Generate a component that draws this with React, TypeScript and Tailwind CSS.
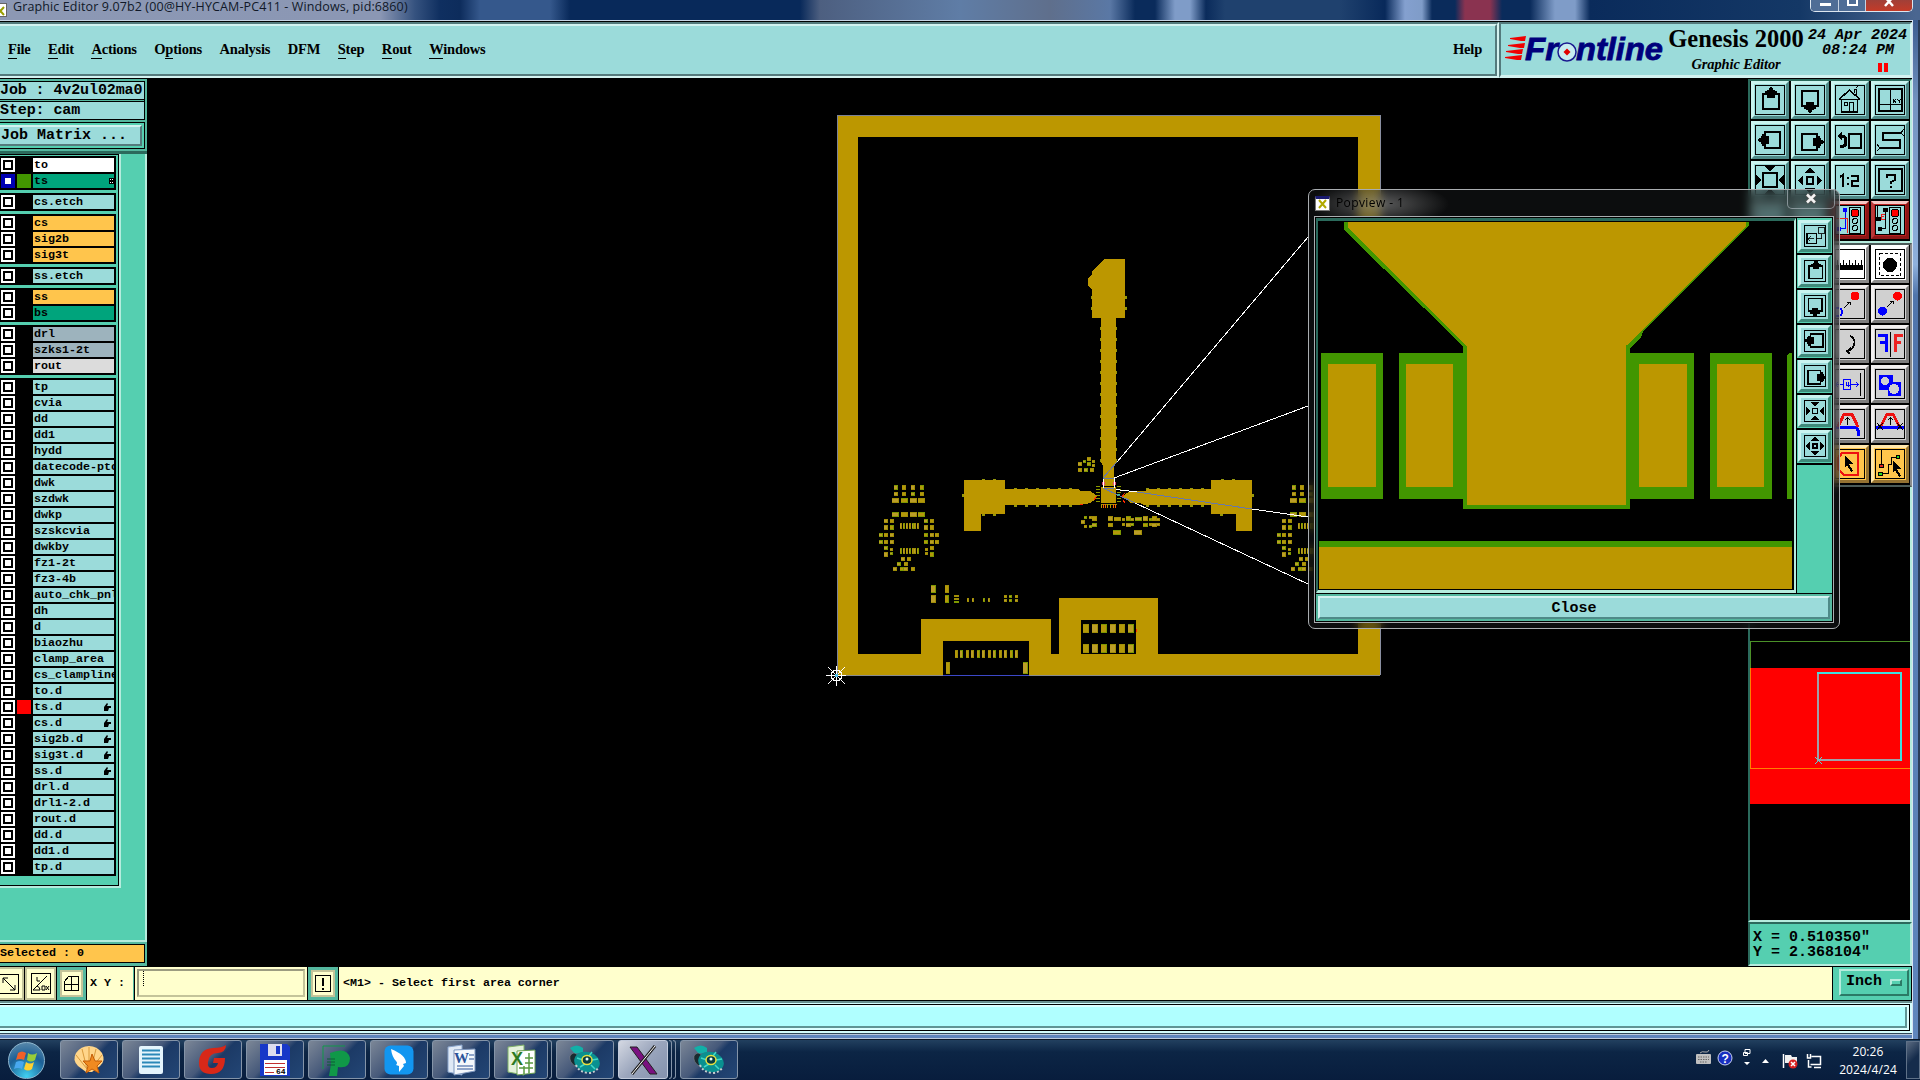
import type { ReactNode } from "react";

type Layer = { name: string; bg?: string; color?: string; active?: boolean; mark?: "grid" | "hand" };

const TEAL = "bg-[#9bdbda]";
const ORANGE = "bg-[#ffc54c]";
const GREEN = "bg-[#00a47c]";
const SLATE = "bg-[#9db3bd]";

const layerGroups: Layer[][] = [
  [
    { name: "to", bg: "bg-white" },
    { name: "ts", bg: GREEN, color: "bg-[#429600]", active: true, mark: "grid" },
  ],
  [{ name: "cs.etch" }],
  [
    { name: "cs", bg: ORANGE },
    { name: "sig2b", bg: ORANGE },
    { name: "sig3t", bg: ORANGE },
  ],
  [{ name: "ss.etch" }],
  [
    { name: "ss", bg: ORANGE },
    { name: "bs", bg: GREEN },
  ],
  [
    { name: "drl", bg: SLATE },
    { name: "szks1-2t", bg: SLATE },
    { name: "rout", bg: "bg-[#dcdcdc]" },
  ],
  [
    { name: "tp" },
    { name: "cvia" },
    { name: "dd" },
    { name: "dd1" },
    { name: "hydd" },
    { name: "datecode-ptc" },
    { name: "dwk" },
    { name: "szdwk" },
    { name: "dwkp" },
    { name: "szskcvia" },
    { name: "dwkby" },
    { name: "fz1-2t" },
    { name: "fz3-4b" },
    { name: "auto_chk_pnl" },
    { name: "dh" },
    { name: "d" },
    { name: "biaozhu" },
    { name: "clamp_area" },
    { name: "cs_clampline" },
    { name: "to.d" },
    { name: "ts.d", color: "bg-[#ff0000]", mark: "hand" },
    { name: "cs.d", mark: "hand" },
    { name: "sig2b.d", mark: "hand" },
    { name: "sig3t.d", mark: "hand" },
    { name: "ss.d", mark: "hand" },
    { name: "drl.d" },
    { name: "drl1-2.d" },
    { name: "rout.d" },
    { name: "dd.d" },
    { name: "dd1.d" },
    { name: "tp.d" },
  ],
];

// [text before, underlined letter, text after]
const menus = [
  ["", "F", "ile"],
  ["", "E", "dit"],
  ["", "A", "ctions"],
  ["O", "p", "tions"],
  ["Analysis", "", ""],
  ["DFM", "", ""],
  ["", "S", "tep"],
  ["", "R", "out"],
  ["", "W", "indows"],
];

const MONO15 = "font-['Liberation_Mono',monospace] text-[15px] font-bold whitespace-pre";
const MONO12 = "font-['Liberation_Mono',monospace] text-[11.67px] font-bold whitespace-pre";

function Svg({ size, box = "1 1 28 28", children }: { size: number; box?: string; children: ReactNode }) {
  return (
    <svg width={size} height={size} viewBox={box} fill="none" stroke="#000" strokeWidth="1" shapeRendering="crispEdges" className="block">
      {children}
    </svg>
  );
}

/* ---------- toolbar glyphs, all on a 30x30 board ---------- */
const up = (
  <>
    <path d="M12 9H8v15h16V9h-4" strokeWidth="2" />
    <path d="M12 13h8V8h2V6h-2V5h-2V3h-1V2h-2v1h-1v2h-2v1h-2v2h2z" fill="#000" stroke="none" />
  </>
);
const down = <g transform="rotate(180 15.500 15)">{up}</g>;
const left = <g transform="rotate(-90 15.500 15)">{up}</g>;
const right = <g transform="rotate(90 15 15.500)">{up}</g>;

const house = (
  <>
    <path d="M4 14.500L14.500 5L25 14.500M6.500 14v13h16V14M4 14.500h21" strokeWidth="1.500" />
    <path d="M9.500 17.500h3v3h-3zM14.500 26v-9h4v9M19 8V4h2v6M21 3l2-2" />
  </>
);
const panXY = (
  <>
    <rect x="4" y="4" width="23" height="22" strokeWidth="2" />
    <path d="M15.500 4v22M4 19.500h23" />
    <path d="M18 14l3 4M21 14l-3 4M22 14l2 2l2-2M24 16v2" />
  </>
);
const back = (
  <>
    <rect x="14" y="9" width="12" height="14" strokeWidth="2" />
    <path d="M4 11h4q3 1 3 6t-6 5" strokeWidth="3" />
    <path d="M2 11l5-5v10z" fill="#000" stroke="none" />
  </>
);
const snake = (
  <>
    <path d="M27 8H8v7h17v8H5" strokeWidth="2" />
    <path d="M29 4l-3 4l3 3M2 19l3 4l-3 3" />
  </>
);
const zoomIn = (
  <>
    <rect x="8" y="8" width="14" height="14" strokeWidth="2" />
    <path d="M9 1h12l-6 5zM9 29h12l-6-5zM1 9v12l5-6zM29 9v12l-5-6z" fill="#000" stroke="none" />
  </>
);
const zoomOut = (
  <>
    <rect x="12" y="12" width="6" height="7" strokeWidth="2" />
    <path d="M9 8h12l-6-5zM9 23h12l-6 5zM8 10v11l-5-5.500zM22 10v11l5-5.500z" fill="#000" stroke="none" />
  </>
);
const oneTwo = (
  <path d="M5 12l3-2v12M13 12v2M13 18v2M16 11h7v5h-6v5h7" strokeWidth="2" />
);
const question = (
  <>
    <rect x="4" y="4" width="23" height="22" strokeWidth="2" />
    <path d="M12 13V10h8v5l-4 2v2M16 21v2" strokeWidth="2" />
  </>
);
const netA = (
  <>
    <path d="M10 3v20H3" stroke="#00f" />
    <path d="M1 13h11v15" stroke="#e22" />
    <circle cx="10" cy="5" r="2.500" fill="#00f" stroke="none" />
    <circle cx="4" cy="24" r="2.500" fill="#00f" stroke="none" />
    <rect x="14.500" y="2.500" width="11" height="26" />
    <circle cx="20" cy="8" r="4" fill="#f00" />
    <circle cx="20" cy="16" r="2.500" />
    <circle cx="20" cy="23" r="2.500" />
  </>
);
const netB = (
  <>
    <path d="M2.500 1v13M10.500 5v18H4M4 14h3" />
    <path d="M6 9v5h4M6 11h3M7 9h3" stroke="#e22" />
    <circle cx="10.500" cy="5" r="2.500" fill="#000" stroke="none" />
    <circle cx="3.500" cy="14" r="2.500" fill="#000" stroke="none" />
    <circle cx="5" cy="24" r="2.500" fill="#000" stroke="none" />
    <rect x="14.500" y="2.500" width="11" height="26" />
    <circle cx="20" cy="8" r="4" fill="#f00" />
    <circle cx="20" cy="16" r="2.500" />
    <circle cx="20" cy="23" r="2.500" />
  </>
);
const ruler = (
  <>
    <path d="M0 18.500h28" strokeWidth="5" />
    <path d="M2.500 11v6M5.500 14v3M8.500 11v6M11.500 14v3M14.500 11v6M17.500 14v3M20.500 11v6M23.500 14v3M26.500 11v6" />
  </>
);
const dotSel = (
  <>
    <rect x="4.500" y="4.500" width="21" height="22" strokeDasharray="3 2" />
    <circle cx="15" cy="16" r="7" fill="#000" stroke="none" />
  </>
);
const copyDot = (
  <>
    <circle cx="3" cy="23" r="4" stroke="#00f" strokeWidth="2" />
    <circle cx="20" cy="7" r="4.500" fill="#f00" stroke="none" />
    <path d="M9 19l6-6M12 13h3v3" />
  </>
);
const moveDot = (
  <>
    <circle cx="7.500" cy="22" r="4.500" fill="#00f" stroke="none" />
    <circle cx="22.500" cy="7" r="4.500" fill="#f00" stroke="none" />
    <path d="M12 18l6-6M15 12h3v3" />
  </>
);
const rotate = <path d="M15 7q6 2 4 9q-2 6-7 6M16 19l-4 3l3 3" strokeWidth="1.500" />;
const mirror = (
  <>
    <path d="M15.500 3v25" />
    <path d="M3 6h8v17M5 13h6" stroke="#00f" strokeWidth="3" />
    <path d="M28 6h-8v17M26 13h-6" stroke="#e22" strokeWidth="3" />
  </>
);
const resize = (
  <>
    <path d="M0 15.500h9M16 15.500h8M3 13l-2 2.500l2 2.500M21 13l2 2.500l-2 2.500" stroke="#00f" />
    <rect x="8.500" y="10.500" width="7" height="10" stroke="#00f" />
    <path d="M11 13v3h4M13.500 13v5" stroke="#00f" />
    <path d="M25.500 4v23" />
  </>
);
const shape = (
  <>
    <path d="M4 6h14v7h8v14H13v-6H4z" fill="#00f" stroke="none" />
    <circle cx="10" cy="12" r="4" fill="#d0d0d0" stroke="none" />
    <circle cx="19" cy="20" r="5" fill="#d0d0d0" stroke="none" />
  </>
);
const bridgeA = (
  <>
    <path d="M0 18h20q4 2 4 9" stroke="#00f" strokeWidth="3" />
    <path d="M3 18L9 5h8l6 13" stroke="#e11" strokeWidth="3" />
    <path d="M12.500 9v7M10 11l2.500-2.500l2.500 2.500" />
  </>
);
const bridgeB = (
  <>
    <path d="M1 18h28" stroke="#00f" strokeWidth="3" />
    <path d="M6 17L12 5h6l6 12" stroke="#e11" strokeWidth="3" />
    <path d="M15.500 9v7M13 11l2.500-2.500l2.500 2.500M2 14l6 7M8 14l-6 7M22 14l6 7M28 14l-6 7" />
  </>
);
const arrowHead = "M0 0l8 8l-4 0l4 7l-2 1l-4-7l-2 3z";
const selPoly = (
  <>
    <path d="M7 4h16v22H9l-6-6V9z" stroke="#e11" strokeWidth="2.500" />
    <path d={arrowHead} transform="translate(10 7)" fill="#000" stroke="none" />
  </>
);
const selNet = (
  <>
    <path d="M6.500 1v16M7 24h6v-9h3V8h6" />
    <circle cx="6.500" cy="17" r="2" fill="#d22" />
    <circle cx="5.500" cy="25" r="2" fill="#2d2" />
    <circle cx="23" cy="8" r="2" fill="#2d2" />
    <path d={arrowHead} transform="translate(18 12)" fill="#000" stroke="none" />
  </>
);
const popIcon = (
  <>
    <rect x="5" y="12" width="12" height="12" strokeWidth="2" />
    <rect x="19.500" y="4.500" width="7" height="8" />
    <path d="M17 18h6v-6M14 18H7M10 15l-3 3l3 3" />
  </>
);
const popZoomIn = (
  <>
    <rect x="12" y="12" width="6" height="6" strokeWidth="2" />
    <path d="M9 4h12l-6 6zM9 26h12l-6-6zM4 9v12l6-6zM26 9v12l-6-6z" fill="#000" stroke="none" />
  </>
);
const popZoomOut = (
  <>
    <rect x="12.500" y="12.500" width="5" height="5" strokeWidth="1.500" />
    <path d="M10 9h10l-5-5zM10 21h10l-5 5zM9 10v10l-5-5zM21 10v10l5-5z" fill="#000" stroke="none" />
  </>
);

const tones = {
  teal: "border-t-[#c9f3ef] border-l-[#c9f3ef] border-b-[#4f8a88] border-r-[#4f8a88] bg-[#9bdbda]",
  red: "border-t-[#f5c6c4] border-l-[#b83a3a] border-b-[#8c1717] border-r-[#8c1717] bg-[#b92020]",
  white: "border-t-white border-l-white border-b-[#8b8b8b] border-r-[#8b8b8b] bg-white",
  gray: "border-t-[#f2f0f0] border-l-[#f2f0f0] border-b-[#7d7d7d] border-r-[#7d7d7d] bg-[#d0d0d0]",
  gold: "border-t-[#ffe7ad] border-l-[#ffe7ad] border-b-[#947232] border-r-[#947232] bg-[#ffc54c]",
};

type Tool = { tone: keyof typeof tones; icon: ReactNode };

const topTools: Tool[] = [
  { tone: "teal", icon: up },
  { tone: "teal", icon: down },
  { tone: "teal", icon: house },
  { tone: "teal", icon: panXY },
  { tone: "teal", icon: left },
  { tone: "teal", icon: right },
  { tone: "teal", icon: back },
  { tone: "teal", icon: snake },
  { tone: "teal", icon: zoomIn },
  { tone: "teal", icon: zoomOut },
  { tone: "teal", icon: oneTwo },
  { tone: "teal", icon: question },
  { tone: "teal", icon: null },
  { tone: "teal", icon: null },
  { tone: "red", icon: netA },
  { tone: "red", icon: netB },
];

const editTools: Tool[] = [
  { tone: "white", icon: null },
  { tone: "white", icon: null },
  { tone: "white", icon: ruler },
  { tone: "white", icon: dotSel },
  { tone: "gray", icon: null },
  { tone: "gray", icon: null },
  { tone: "gray", icon: copyDot },
  { tone: "gray", icon: moveDot },
  { tone: "gray", icon: null },
  { tone: "gray", icon: null },
  { tone: "gray", icon: rotate },
  { tone: "gray", icon: mirror },
  { tone: "gray", icon: null },
  { tone: "gray", icon: null },
  { tone: "gray", icon: resize },
  { tone: "gray", icon: shape },
  { tone: "gray", icon: null },
  { tone: "gray", icon: null },
  { tone: "gray", icon: bridgeA },
  { tone: "gray", icon: bridgeB },
  { tone: "gold", icon: null },
  { tone: "gold", icon: null },
  { tone: "gold", icon: selPoly },
  { tone: "gold", icon: selNet },
];

function ToolButton({ tone, icon }: Tool) {
  return (
    <div className={`w-[38px] h-[38px] border-[3px] p-px ${tones[tone]}`}>
      <div className={`w-[30px] h-[30px] border border-black overflow-hidden ${tone === "red" ? TEAL : ""}`}>
        <Svg size={28}>{icon}</Svg>
      </div>
    </div>
  );
}

function TitleBar() {
  return (
    <div className="h-[20px] shrink-0 flex justify-between overflow-hidden bg-[linear-gradient(90deg,#8c98b4_0,#8b97b4_380px,#35527f_415px,#0f2f60_440px,#0d2c5c_460px,#35588c_480px,#35588c_550px,#08295a_570px,#08295a_800px,#4d5f80_820px,#5f7da6_960px,#5f6f8c_1050px,#5a78a5_1110px,#0a2b5b_1135px,#0a2b5b_1155px,#7f9cc8_1175px,#7f9cc8_1190px,#0a2b5b_1206px,#1f416e_1225px,#1f416e_1340px,#08295a_1385px,#84a0cf_1405px,#7f9cc8_1422px,#0a2b5b_1432px,#0a2b5b_1455px,#8a3350_1465px,#8a3350_1490px,#0a2b5b_1502px,#0a2b5b_1530px,#7f9cc8_1555px,#7f9cc8_1575px,#0a2b5b_1590px,#143866_1800px,#4a6690_1915px)]">
      <div className="flex items-center">
        <div className="w-[7px] h-[14px] border border-l-0 border-[#666] bg-white overflow-hidden">
          <svg width="7" height="12"><path d="M-3 3L4 11M4 3L-3 11" stroke="#99a000" strokeWidth="2" /></svg>
        </div>
        <span className="ml-[6px] -mt-[6px] font-['Open_Sans',sans-serif] text-[12.5px] leading-[18px] tracking-[0.12px] text-[#101828] whitespace-pre">Graphic Editor 9.07b2 (00@HY-HYCAM-PC411 - Windows, pid:6860)</span>
      </div>
      <div className="flex h-[12px] w-[103px] mr-[7px] rounded-b-[5px] border border-t-0 border-[#dde6f0] overflow-hidden">
        <div className="w-[28px] bg-[#4f6d96] border-r border-[#c5d2e2] pt-[3px] pl-[9px]"><div className="w-[11px] h-[3px] bg-white" /></div>
        <div className="w-[27px] bg-[#4f6d96] border-r border-[#c5d2e2] pl-[8px]"><div className="w-[11px] h-[6px] border-2 border-t-0 border-white" /></div>
        <div className="flex-1 bg-[linear-gradient(#a04038,#c43a28)] flex justify-center">
          <svg width="12" height="8"><path d="M2 -3L10 6M10 -3L2 6" stroke="#fff" strokeWidth="2.500" /></svg>
        </div>
      </div>
    </div>
  );
}

function FrontlineLogo() {
  return (
    <svg width="166" height="52" viewBox="0 0 166 52" className="block shrink-0">
      <path d="M9 14l16-2l-1 5h-4l-11-2zM7 21l17-2l-1 5h-4l-12-2zM5 27l17-2l-1 5h-4l-12-2zM4 33l17-2l-1 5h-4l-12-2z" fill="#f00000" />
      <g fill="#00007c" fontFamily="'Liberation Sans', sans-serif" fontWeight="700" fontStyle="italic" fontSize="31" stroke="#00007c" strokeWidth="0.800">
        <text x="24" y="36" textLength="33" lengthAdjust="spacingAndGlyphs">Fr</text>
        <text x="75" y="36" textLength="87" lengthAdjust="spacingAndGlyphs">ntline</text>
      </g>
      <circle cx="66" cy="28" r="9" fill="#c8ecf0" stroke="#1a1a90" strokeWidth="1.500" />
      <path d="M66 24.500l3.500 3.500l-3.500 3.500l-3.500-3.500z" fill="#e00000" />
    </svg>
  );
}

function Header() {
  return (
    <div className="flex h-[56px] shrink-0">
      <div className="w-[1499px] border-t-2 border-t-[#547a7c] border-b-2 border-r-2 border-b-[#d3f2f0] border-r-[#d3f2f0]">
        <div className={`h-full flex items-start justify-between border-t-2 border-t-[#d3f2f0] border-b-2 border-r-2 border-b-[#547a7c] border-r-[#547a7c] ${TEAL} font-['Liberation_Serif',serif] font-bold text-[14.500px] leading-[18px] tracking-[-0.2px] pt-[14px]`}>
          <div className="flex gap-[17.500px] pl-[8px]">
            {menus.map(([pre, key, post]) => (
              <span key={pre + key + post} className="whitespace-pre">
                {pre}
                {key && <span className="border-b border-black pb-px">{key}</span>}
                {post}
              </span>
            ))}
          </div>
          <span className="pr-[13px]">Help</span>
        </div>
      </div>
      <div className={`flex-1 flex border-t-2 border-l-2 border-t-[#547a7c] border-l-[#547a7c] border-b-[3px] border-r-2 border-b-[#d3f2f0] border-r-[#d3f2f0] ${TEAL} overflow-hidden`}>
        <FrontlineLogo />
        <div className="w-[138px] shrink-0 flex flex-col items-center font-['Liberation_Serif',serif] font-bold">
          <span className="text-[24.500px] leading-[30px] whitespace-nowrap">Genesis 2000</span>
          <span className="text-[14.500px] leading-[18px] mt-[1px] italic font-bold tracking-[-0.1px] whitespace-nowrap">Graphic Editor</span>
        </div>
        <div className={`flex flex-col items-end pl-[3px] ${MONO15} italic leading-[15px] pt-[4px]`}>
          <span>24 Apr 2024</span>
          <span className="pr-[13px]">08:24 PM</span>
          <div className="flex gap-[2px] mr-[19px] mt-[5px]">
            <div className="w-[4px] h-[9px] bg-[#ff0000]" />
            <div className="w-[4px] h-[9px] bg-[#ff0000]" />
          </div>
        </div>
      </div>
    </div>
  );
}

function LayerRow({ layer }: { layer: Layer }) {
  return (
    <div className="flex h-[14px] mb-[2px] gap-[2px] pl-px">
      <div className={`w-[14px] h-[14px] p-[2px] shrink-0 ${layer.active ? "bg-[#0000b4]" : "bg-white"}`}>
        <div className={`w-[10px] h-[10px] border-2 bg-white ${layer.active ? "border-[#0000b4]" : "border-black"}`} />
      </div>
      <div className={`w-[14px] shrink-0 ${layer.color ?? "bg-black"}`} />
      <div className={`w-[81px] shrink-0 flex items-center justify-between overflow-hidden pl-px ${layer.bg ?? TEAL}`}>
        <span className={`${MONO12} leading-[14px]`}>{layer.name}</span>
        {layer.mark === "grid" && (
          <svg width="5" height="6" shapeRendering="crispEdges" className="shrink-0"><rect width="5" height="6" fill="#000" /><path d="M1 1h1v1h-1zM3 1h1v1h-1zM1 4h1v1h-1zM3 4h1v1h-1z" fill="#fff" /></svg>
        )}
        {layer.mark === "hand" && (
          <svg width="9" height="8" className="mr-[2px] shrink-0"><path d="M1 4L4 0L5 1L4 3H8V5H6L5 8H1z" fill="#000" /></svg>
        )}
      </div>
    </div>
  );
}

function Sidebar() {
  return (
    <div className="w-[147px] shrink-0 flex flex-col bg-[#55b89f] overflow-hidden border-t border-black">
      <div className="mt-[2px] w-[145px] border border-l-0 border-black">
        <div className={`h-[18px] ${TEAL} ${MONO15} leading-[18px] tracking-[-0.1px] border-b border-black`}>Job : 4v2ul02ma0</div>
        <div className="h-px bg-[#55b89f]" />
        <div className={`h-[18px] ${TEAL} ${MONO15} leading-[17px] tracking-[-0.1px] border-t border-black`}>Step: cam</div>
      </div>
      <div className="mt-[2px] h-[27px] w-[145px] border border-l-0 border-black bg-[#55cfb0] pt-[2px] pr-[2px] shrink-0">
        <div className={`h-[21px] border-t-2 border-t-[#d3f2f0] border-b-2 border-r-2 border-b-[#547a7c] border-r-[#547a7c] ${TEAL} ${MONO15} leading-[18px] indent-px`}>Job Matrix ...</div>
      </div>
      <div className="mt-[2px] h-[3px] shrink-0 bg-[#2b6a5c]" />
      <div className="flex-1 border-r-2 border-[#b5ecdd] border-b-2 bg-[#55cfb0]">
        <div className="w-[121px] border-r-2 border-b-2 border-[#b5ecdd]">
          <div className="h-[732px] border-r border-t border-b border-black pt-px pr-[2px]">
            <div className="flex flex-col gap-[3px]">
              {layerGroups.map((group, i) => (
                <div key={i} className="w-[116px] bg-black pt-[2px]">
                  {group.map((layer) => (
                    <LayerRow key={layer.name} layer={layer} />
                  ))}
                </div>
              ))}
            </div>
          </div>
        </div>
      </div>
      <div className={`mt-[2px] mb-[3px] h-[19px] w-[145px] shrink-0 border border-l-0 border-black ${ORANGE} ${MONO12} leading-[16px]`}>Selected : 0</div>
    </div>
  );
}

/* ---------- board artwork ---------- */
type Pad = [x: number, y: number, w: number, h: number];

const cols = (xs: number[], y: number, w: number, h: number): Pad[] => xs.map((x) => [x, y, w, h]);

const connectorCluster: Pad[] = [
  ...cols([894, 902, 911, 920], 485, 4, 5),
  ...cols([894, 902, 911, 920], 492, 4, 4),
  ...cols([892, 901, 910, 918], 498, 7, 5),
  ...cols([892, 901, 910, 918], 512, 7, 5),
  ...cols([884, 890, 924, 930], 519, 4, 4),
  ...cols([884, 890, 924, 930], 525, 4, 5),
  ...cols([879, 884, 890, 924, 930, 935], 533, 4, 4),
  ...cols([879, 884, 890, 924, 930, 935], 540, 4, 4),
  ...cols([884, 930], 546, 4, 4),
  ...cols([884, 930], 552, 4, 5),
  ...cols([890, 925], 548, 3, 3),
  ...cols([890, 925], 552, 3, 3),
  ...cols([900, 903, 906, 909, 912, 914, 917], 523, 2, 6),
  ...cols([900, 903, 906, 909, 912, 914, 917], 548, 2, 6),
  ...cols([901, 907], 557, 4, 4),
  ...cols([897, 904], 562, 4, 4),
  ...cols([893, 900, 904, 911], 567, 4, 4),
];

const pads: Pad[] = [
  ...connectorCluster,
  ...connectorCluster.map(([x, y, w, h]): Pad => [x + 398, y, w, h]),
  ...cols([931], 585, 5, 8),
  ...cols([945], 585, 4, 8),
  ...cols([931], 595, 5, 8),
  ...cols([945], 595, 4, 8),
  ...[595, 598, 601].map((y): Pad => [954, y, 5, 2]),
  ...cols([967, 972, 983, 988], 598, 2, 4),
  ...cols([1004, 1009, 1015], 595, 3, 3),
  ...cols([1004, 1009, 1015], 599, 3, 3),
  ...cols([1087], 457, 4, 4),
  ...cols([1083, 1092], 460, 3, 3),
  ...cols([1078, 1087], 462, 4, 4),
  ...cols([1092], 464, 3, 3),
  ...cols([1078, 1084, 1090], 468, 4, 4),
  ...cols([1081], 520, 4, 4),
  ...cols([1084, 1089], 516, 3, 3),
  ...cols([1084, 1089], 525, 3, 3),
  ...cols([1092, 1108, 1126, 1143, 1152], 516, 5, 5),
  ...cols([1092, 1108, 1126, 1143, 1152], 523, 5, 4),
  ...cols([1114, 1135], 517, 7, 4),
  ...cols([1122, 1131, 1149, 1157], 518, 3, 3),
  ...cols([1122, 1131, 1149, 1157], 523, 3, 3),
  ...cols([1113, 1134], 530, 8, 5),
  ...cols(Array.from({ length: 12 }, (_, i) => 955 + Math.round(i * 5.46)), 650, 3, 8),
  ...cols([946], 662, 4, 12),
  ...cols([1023], 662, 5, 12),
  ...cols([0, 1, 2, 3, 4, 5].map((i) => 1083 + i * 9), 624, 6, 9),
  ...cols([0, 1, 2, 3, 4, 5].map((i) => 1083 + i * 9), 644, 6, 9),
];

// stitching vias sticking out of the antenna feed lines
const bumps: Pad[] = [
  ...Array.from({ length: 13 }, (_, i): Pad => [1100, 327 + i * 11, 17, 3]),
  ...Array.from({ length: 6 }, (_, i): Pad => [1014 + i * 11, 488, 3, 19]),
  ...Array.from({ length: 6 }, (_, i): Pad => [1146 + i * 11, 488, 3, 19]),
  [982, 479, 3, 2], [993, 479, 3, 2], [1221, 479, 3, 2], [1232, 479, 3, 2],
  [962, 494, 2, 3], [1252, 494, 2, 3], [1125, 296, 2, 3], [1125, 307, 2, 3],
  [982, 514, 3, 2], [993, 514, 3, 2], [1220, 514, 3, 2], [1091, 307, 2, 3], [1091, 296, 2, 3],
];

function Board() {
  return (
    <svg width="1601" height="888" viewBox="147 78 1601 888" shapeRendering="crispEdges" className="block bg-black shrink-0">
      {/* vias go first so that only their tips show beside the copper */}
      {bumps.map(([x, y, w, h], i) => (
        <rect key={i} x={x} y={y} width={w} height={h} fill="#96980a" />
      ))}
      <g fill="#bc9700">
        <path fillRule="evenodd" d="M837 115H1380V675H1029V641H943V675H837zM858 137V654H921V619H1051V654H1059V598H1158V654H1358V137zM1081 620H1136V654H1081z" />
        <path d="M1105 259H1125V318H1116V464H1114V488H1103V466L1101 462V318H1092V290L1088 286V279L1092 274V271z" />
        <path d="M964 480H1005V489H1078L1080 491H1090L1096 495V499L1090 503L1080 505H1005V514H981V531H964z" />
        <path d="M1122 496L1131 491H1145L1147 489H1211V480H1252V531H1236V514H1211V505H1144L1140 503H1131z" />
      </g>
      {pads.map(([x, y, w, h], i) => (
        <g key={i}>
          <rect x={x} y={y} width={w} height={h} fill={i % 3 === 0 ? "#7d9800" : "#a08e08"} />
          <rect x={x} y={y + 1} width={w - 1} height={h - 2} fill={i % 2 ? "#b3980a" : "#bb9d28"} />
        </g>
      ))}
      {/* package in the middle with its pins */}
      <rect x="1100.500" y="486.500" width="16" height="17" fill="#bc9700" stroke="#000" />
      <path d="M1096 486.500h4M1096 489.500h4M1096 492.500h4M1096 495.500h4M1096 498.500h4M1096 501.500h4M1117 486.500h4M1117 489.500h4M1117 492.500h4M1117 498.500h4M1117 501.500h4M1101 504.500h16" stroke="#8d9a00" />
      <path d="M1101.500 504v4M1107.500 504v4M1110.500 504v4" stroke="#bc9700" />
      <path d="M1103.500 504v4M1105.500 504v4M1113.500 504v4M1115.500 504v4" stroke="#ff6000" strokeWidth="1" />
      <path d="M1094 500l3-4M1080 505l3-1M1122 497l3-4M1123 500l2 3M1136 629v3" stroke="#ff2800" />
      <path d="M1102 483.500h3M1113 483.500h3" stroke="#e84a78" strokeWidth="3" />
      <path d="M1117 495h3" stroke="#20e090" strokeWidth="2" />
      <path d="M837.500 115.500H1380.500M837.500 115V675.500" stroke="#7c8297" fill="none" />
      <path d="M1380.500 115V675" stroke="#8a8fa0" />
      <path d="M837 675.500H943M1029 675.500H1380" stroke="#8a8c90" />
      <path d="M943 675.500H1029" stroke="#3c48c8" />
      {/* zoom guides towards the popup */}
      <g fill="none">
        <path d="M1117 462L1308 237M1114 478L1308 406M1116 489.500L1137 492M1252 509L1308 517M1135 503L1308 584M1103.500 478v10M1114.500 478v10" stroke="#fff" />
        <path d="M1103 478L1117 462M1103 478.500H1114M1103 488.500H1114M1137 492L1252 509M1103 488L1135 503" stroke="#6878a8" />
      </g>
      <g stroke="#fff" fill="none">
        <path d="M826 675.500H846M836.500 666V686M828 667L845 684M845 667L828 684" />
        <circle cx="836.500" cy="675.500" r="5.500" />
      </g>
      <rect x="835" y="674" width="3" height="3" fill="#50c0e8" />
    </svg>
  );
}

function Navigator() {
  return (
    <svg width="160" height="433" viewBox="1750 487 160 433" shapeRendering="crispEdges" className="block">
      <rect x="1750" y="668" width="160" height="136" fill="#ff0000" />
      <path d="M1750.500 668V641.500H1910" stroke="#4a9028" fill="none" />
      <path d="M1750.500 668V768.500H1910" stroke="#ff8000" fill="none" />
      <path d="M1818 761V673H1901V760H1818" stroke="#a0a0a8" strokeWidth="2" fill="none" />
      <path d="M1817 673H1901V761" stroke="#40e0e0" strokeWidth="2" fill="none" />
      <path d="M1815 757l7 7M1822 757l-7 7" stroke="#50d8d8" />
    </svg>
  );
}

function RightPanel() {
  return (
    <div className="w-[164px] shrink-0 flex flex-col bg-black border-t border-black">
      <div className="border-l-2 border-t-2 border-[#2b6a5c] border-r-2 border-r-[#b5ecdd] h-[162px] pl-px grid grid-cols-[repeat(4,38px)] gap-[2px] content-start">
        {topTools.map((tool, i) => (
          <ToolButton key={i} {...tool} />
        ))}
      </div>
      <div className="h-[2px] shrink-0 bg-[#b5ecdd]" />
      <div className="border-l-2 border-t-2 border-b-2 border-[#4a5a58] border-r-2 border-r-[#8b8b8b] h-[244px] pl-px grid grid-cols-[repeat(4,38px)] gap-[2px] content-start">
        {editTools.map((tool, i) => (
          <ToolButton key={i} {...tool} />
        ))}
      </div>
      <div className="flex-1 border-l-2 border-l-[#2b6a5c] border-r-2 border-r-[#b5ecdd] border-b-2 border-b-[#b5ecdd] overflow-hidden">
        <Navigator />
      </div>
      <div className={`h-[44px] shrink-0 border-t-2 border-l-2 border-[#2b6a5c] border-r-2 border-r-[#b5ecdd] border-b-2 border-b-[#b5ecdd] bg-[#55cfb0] pl-[3px] pt-[6px] ${MONO15} leading-[15px]`}>
        <div>X = 0.510350"</div>
        <div>Y = 2.368104"</div>
      </div>
    </div>
  );
}

function CommandBar() {
  const pale = "bg-[#ffffcd]";
  return (
    <div className={`h-[35px] shrink-0 flex gap-px bg-black py-px ${MONO12}`}>
      <div className={`w-[24px] ${pale} border-2 border-l-0 border-[#c4c49a] flex items-center`}>
        <div className="w-[19px] h-[20px] border border-l-0 border-black">
          <svg width="17" height="18" stroke="#000" fill="none"><path d="M3 3l12 12M3 8V3h5M15 10v5h-5" /></svg>
        </div>
      </div>
      <div className={`w-[31px] ${pale} border-2 border-[#c4c49a] flex items-center justify-center`}>
        <div className="w-[20px] h-[21px] border border-black">
          <svg width="18" height="19" stroke="#000" fill="none"><path d="M1 16L15 2M5 3v4h3M1 16h7q0-3-3-4M10 12h3v4h-3zM14 12l3 4M17 12l-3 4" /></svg>
        </div>
      </div>
      <div className="w-[29px] bg-[#55b89f] p-[3px] flex">
        <div className={`flex-1 ${pale} border-2 border-[#c4c49a] flex items-center justify-center`}>
          <svg width="17" height="17" stroke="#000" fill="none" shapeRendering="crispEdges"><path d="M5.500 1.500h10v14h-14v-9zM8.500 1v15M1 9.500h15" /></svg>
        </div>
      </div>
      <div className={`w-[47px] ${pale} border-r border-[#55b89f] leading-[32px] pl-[3px]`}>X Y :</div>
      <div className={`w-[172px] ${pale} p-[2px] pb-[3px]`}>
        <div className="h-full border-2 border-t-[#9c9c80] border-l-[#9c9c80] border-b-[#c4c49a] border-r-[#c4c49a] pl-[4px]">
          <div className="w-[3px] h-[15px] border-l border-dotted border-black" />
        </div>
      </div>
      <div className="w-[30px] bg-[#55b89f] p-[3px] flex">
        <div className={`flex-1 ${pale} border-2 border-[#c4c49a] flex items-center justify-center`}>
          <div className="w-[16px] h-[17px] border border-black flex flex-col items-center justify-center gap-[2px]">
            <div className="w-[2px] h-[8px] bg-black" />
            <div className="w-[2px] h-[2px] bg-black" />
          </div>
        </div>
      </div>
      <div className={`flex-1 ${pale} leading-[32px] pl-[4px]`}>{"<M1> - Select first area corner"}</div>
      <div className="w-[79px] bg-[#55cfb0] border-r border-black pl-[6px] py-[2px] pr-[2px]">
        <div className={`h-[27px] w-[70px] border-2 border-t-[#b5ecdd] border-l-[#b5ecdd] border-b-[#2b7a66] border-r-[#2b7a66] flex items-center justify-between pl-[5px] pr-[5px] ${MONO15}`}>
          Inch
          <div className="w-[12px] h-[7px] border-2 border-t-[#b5ecdd] border-l-[#b5ecdd] border-b-[#2b7a66] border-r-[#2b7a66]" />
        </div>
      </div>
    </div>
  );
}

function MessageLine() {
  return (
    <div className="h-[33px] shrink-0 border-t-2 border-[#6a8f8f] bg-[#d3fdfd]">
      <div className="h-[27px] mt-px w-[1910px] border border-l-0 border-black">
        <div className="h-full border-t-2 border-t-[#dcffff] border-b-[#dcffff] border-b-2 border-r-2 border-r-[#dcffff]">
          <div className="h-full border-b-2 border-r-2 border-[#5f9595] bg-[#b0ffff]" />
        </div>
      </div>
      <div className="mt-[2px] h-px bg-[#304858]" />
    </div>
  );
}

const popTools = [popIcon, up, down, left, right, popZoomIn, popZoomOut];

function Popview() {
  return (
    <div className="absolute left-[1308px] top-[189px] w-[532px] h-[440px] rounded-[7px] border border-[#a9adb0] bg-[#15171a]/55 backdrop-blur-[5px] p-[5px] pt-0">
      <div className="h-[26px] flex items-start justify-between bg-[radial-gradient(ellipse_70px_22px_at_65px_14px,rgba(190,190,190,0.45),transparent)]">
        <div className="flex items-center gap-[6px] pt-[5px] pl-px">
          <div className="w-[15px] h-[15px] border border-[#777] border-t-[3px] border-t-[#1a1a70] bg-white">
            <svg width="13" height="11"><path d="M3 1L10 9M10 1L3 9" stroke="#b0a800" strokeWidth="2" /></svg>
          </div>
          <span className="font-['Open_Sans',sans-serif] text-[12px] leading-[16px] tracking-[0.4px] text-black">Popview - 1</span>
        </div>
        <div className="w-[48px] h-[19px] mr-[-1px] rounded-b-[5px] border border-t-0 border-[#a9b4ba]/70 flex items-center justify-center pb-[2px]">
          <svg width="12" height="11"><path d="M2 1.500L10 9.500M10 1.500L2 9.500" stroke="#555" strokeWidth="4" /><path d="M2 1.500L10 9.500M10 1.500L2 9.500" stroke="#f4f4f4" strokeWidth="2.500" /></svg>
        </div>
      </div>
      <div className="w-[520px] h-[407px] border border-[#a9adb0] bg-black p-px flex flex-col">
        <div className="h-[375px] flex">
          <div className="w-[480px] border-t-[3px] border-l-2 border-[#2b6a5c] border-b-[3px] border-r-2 border-b-[#b5ecdd] border-r-[#b5ecdd] bg-black overflow-hidden">
            <svg width="476" height="369" viewBox="1318 221 476 369" shapeRendering="crispEdges" className="block">
              <g fill="#429600">
                <path d="M1344 222H1749V225L1644 330L1641 337L1630 348V509H1463V346L1344 230z" />
                <path d="M1321 353H1383V499H1321zM1399 353H1464V499H1399zM1630 353H1694V499H1630zM1710 353H1772V499H1710zM1787 355L1789 353H1792V499H1787zM1319 541H1792V548H1319z" />
              </g>
              <g fill="#bc9700">
                <path d="M1348 222H1746V227L1626 346V505H1467V346L1348 228z" />
                <path d="M1328 364H1376V487H1328zM1406 364H1453V487H1406zM1639 364H1687V487H1639zM1717 364H1764V487H1717zM1319 547H1792V589H1319z" />
              </g>
            </svg>
          </div>
          <div className="flex-1 bg-[#55cfb0] ml-px pt-[2px]">
            {popTools.map((icon, i) => (
              <div key={i} className="h-[35px] border-b-2 border-black p-px">
                <div className="w-[33px] h-[32px] -mt-px border-[3px] border-t-[#c9f3ef] border-l-[#c9f3ef] border-b-[#3f8a7a] border-r-[#3f8a7a] bg-[#9bdbda] flex items-center justify-center">
                  <div className="w-[22px] h-[22px] border border-black">
                    <Svg size={20} box="3 3 24 24">{icon}</Svg>
                  </div>
                </div>
              </div>
            ))}
          </div>
        </div>
        <div className="mt-px h-[27px] bg-[#55b89f] p-[2px]">
          <div className={`h-[23px] border-2 border-t-[#d3f2f0] border-l-[#d3f2f0] border-b-[#4f8a88] border-r-[#4f8a88] ${TEAL} text-center ${MONO15} leading-[21px]`}>Close</div>
        </div>
      </div>
    </div>
  );
}

const reel = (
  <svg width="34" height="34" viewBox="0 0 34 34">
    <path d="M2 5q7-5 13 0v4l-8 2z" fill="#12b0a8" />
    <path d="M2 13q4-6 8 0l-3 10q-6-4-5-10z" fill="#1a2a30" stroke="#888" strokeWidth="0.500" />
    <ellipse cx="19" cy="19" rx="13" ry="10" fill="#0a9090" transform="rotate(15 19 19)" />
    <path d="M8 22q3 7 12 8q7 0 11-6" stroke="#c8d0d0" strokeWidth="2" strokeDasharray="2 2" fill="none" />
    <path d="M9 15l6 2M12 24l5-3M27 26l-4-4M30 16l-6 1M24 9l-3 4" stroke="#40d8c8" strokeWidth="1.500" />
    <ellipse cx="19" cy="17" rx="5" ry="4.500" fill="#0a3c40" stroke="#e8e040" strokeWidth="1.500" />
    <circle cx="19" cy="16" r="1.500" fill="#e8fff8" />
  </svg>
);

const taskIcons: { icon: ReactNode; stacked?: boolean; active?: boolean }[] = [
  {
    icon: (
      <svg width="34" height="34" viewBox="0 0 34 34">
        <path d="M17 3q8 0 13 7q4 8-2 13l-8 6h-6l-8-6q-6-6-2-13q5-7 13-7z" fill="#ffd58a" />
        <path d="M17 4v22M10 6l5 20M24 6l-5 20M4 12l11 14M30 12L19 26" stroke="#d99a3c" fill="none" />
        <path d="M20 11l3 7l7 0l-5 5l2 7l-7-4l-6 4l2-7l-5-5h7z" fill="#f08a20" stroke="#c25c08" />
      </svg>
    ),
  },
  {
    icon: (
      <svg width="28" height="30" viewBox="0 0 28 30">
        <rect x="2" y="1" width="24" height="28" rx="2" fill="#e4f4fc" />
        <path d="M5 5.500h18M5 9.500h18M5 13.500h18M5 17.500h18M5 21.500h18" stroke="#2a88b8" strokeWidth="2" />
      </svg>
    ),
  },
  { icon: <svg width="32" height="32" viewBox="0 0 32 32"><path d="M29 1q0 7-8 8q-9 0-10 9q-1 6 4 6q5 0 6-5l-5 0l1-5l11 0q0 16-14 16q-12 0-12-11q0-14 14-15q9 0 13-3z" fill="#d82818" /></svg> },
  {
    icon: (
      <svg width="32" height="34" viewBox="0 0 32 34">
        <path d="M1 1h27l3 3v29H1z" fill="#1838c8" />
        <rect x="9" y="1" width="14" height="12" fill="#dde" /><rect x="17" y="3" width="4" height="8" fill="#1838c8" />
        <rect x="5" y="17" width="23" height="15" fill="#fff" />
        <path d="M6 20.500h20M6 24.500h20M6 29.500h9" stroke="#c03030" />
        <text x="17" y="31" fontSize="8" fontFamily="'Liberation Mono', monospace" fontWeight="700">64</text>
      </svg>
    ),
  },
  { icon: <svg width="32" height="34" viewBox="0 0 32 34"><path d="M2 26V3h22" stroke="#109848" fill="none" /><path d="M9 10q17-7 20 5q0 11-12 9l-1 9h-8l2-12z" fill="#109848" /><path d="M6 16h8M6 19h8M6 22h8" stroke="#0c5c34" /></svg> },
  { icon: <svg width="30" height="30" viewBox="0 0 30 30"><rect width="29" height="29" x="0.500" y="0.500" rx="6" fill="#1296f0" /><path d="M7 4q15 6 15 14l-3 1l1 2l-5 6v-6l-3-1q2-2 0-4q-4-4-5-12z" fill="#fff" /></svg> },
  {
    icon: (
      <svg width="32" height="32" viewBox="0 0 32 32">
        <path d="M3 3l14-2v30l-14-3z" fill="#dfe9f6" stroke="#8aa5cc" />
        <path d="M9 6l21-1v22l-21 4z" fill="#f4f8fc" stroke="#7d96bd" />
        <text x="9" y="19" fontSize="15" fontFamily="'Liberation Serif', serif" fontWeight="700" fill="#2a5298">W</text>
        <path d="M24 11h5M24 15h5M12 22h16M12 25h16" stroke="#2a5298" />
      </svg>
    ),
  },
  {
    stacked: true,
    icon: (
      <svg width="32" height="32" viewBox="0 0 32 32">
        <path d="M3 3l16-2v30l-16-3z" fill="#e4f2dc" stroke="#7fb068" />
        <path d="M12 7l18-1v23l-18 2z" fill="#fff" stroke="#6aa050" />
        <path d="M20 14h8M20 19h8M14 24h14M24 9v20M19 22v8" stroke="#5a9a40" strokeWidth="1.500" />
        <text x="6" y="21" fontSize="18" fontFamily="'Liberation Sans', sans-serif" fontWeight="700" fill="#2c7a22">X</text>
      </svg>
    ),
  },
  { icon: reel },
  { active: true, stacked: true, icon: <svg width="32" height="32" viewBox="0 0 32 32"><path d="M3 3h7l20 27h-7z" fill="#7a1080" stroke="#222" /><path d="M28 2L5 30" stroke="#222" strokeWidth="3" /><path d="M28 2L5 30" stroke="#fff" strokeWidth="1" /></svg> },
  { icon: reel },
];

function Taskbar() {
  return (
    <div className="h-[41px] shrink-0 flex items-start border-t border-[#0a1524] bg-[linear-gradient(#22405f,#0c2545_30%,#081d3d)]">
      <div className="w-[60px] flex justify-center pr-[7px] pt-[2px]">
        <div className="w-[37px] h-[37px] rounded-full border border-[#8fb8d0] bg-[radial-gradient(circle_at_50%_95%,#40d0f0,#1c5f96_55%,#6a94b0)] flex items-center justify-center">
          <svg width="26" height="26" viewBox="0 0 26 26">
            <path d="M4 5q4-3 8 0l-2 7q-4-2-8 0z" fill="#f06028" />
            <path d="M14 5q4 3 9 0l-2 7q-4 3-8 0z" fill="#98cc38" />
            <path d="M2 14q4-2 8 0l-2 7q-4-2-8 0z" fill="#48a8f0" />
            <path d="M12 14q4 3 8 0l-2 7q-4 3-8 0z" fill="#ffd030" />
          </svg>
        </div>
      </div>
      <div className="flex gap-[4px] flex-1">
        {taskIcons.map(({ icon, stacked, active }, i) => (
          <div key={i} className="w-[58px] h-[39px] flex gap-px">
            <div className={`flex-1 rounded-[3px] border flex items-center justify-center ${active ? "border-[#c2cbdc] bg-[linear-gradient(135deg,#d4d8e2,#9aa5bc_50%,#8492ae)]" : "border-[#8494a8] bg-[linear-gradient(135deg,#7c8797,#46597a_45%,#1c3a66_55%,#234675)]"}`}>{icon}</div>
            {stacked && <div className="w-[3px] rounded-r-[3px] border border-l-0 border-[#8494a8]" />}
            {active && <div className="w-[3px] rounded-r-[3px] border border-l-0 border-[#8494a8]" />}
          </div>
        ))}
      </div>
      <div className="flex items-center h-full text-white">
        <svg width="146" height="38" viewBox="1692 1041 146 38" fill="none">
          <rect x="1696" y="1054" width="15" height="10" rx="1" fill="#c0c0c0" />
          <path d="M1698 1057h11M1698 1059.500h11M1700 1062h7" stroke="#666" strokeDasharray="1.500 1" />
          <path d="M1700 1053q2-2 5-1t4-2" stroke="#aaa" />
          <circle cx="1725" cy="1058" r="7" fill="#1830c0" stroke="#c8d0f0" />
          <text x="1721.500" y="1062.500" fontSize="12" fontWeight="700" fill="#fff" fontFamily="'Liberation Sans', sans-serif">?</text>
          <path d="M1745 1049.500h5v4h-5zM1743.500 1052.500h4v3h-4z" stroke="#fff" />
          <path d="M1744 1062h6l-3 3zM1762 1063h7l-3.500-4z" fill="#fff" />
          <path d="M1783.500 1054v14" stroke="#fff" strokeWidth="1.500" />
          <path d="M1785 1055h6l1 2h5v6l-12 0z" fill="#f0f0f0" />
          <circle cx="1793" cy="1064" r="4.500" fill="#d82020" />
          <path d="M1791 1062l4 4M1795 1062l-4 4" stroke="#fff" strokeWidth="1.500" />
          <path d="M1811.500 1056.500h9v8h-10M1814 1067.500h7M1808.500 1060v7h3M1807.500 1054v4h3v-4" stroke="#fff" strokeWidth="1.500" />
        </svg>
        <div className="w-[60px] text-center font-['Open_Sans',sans-serif] text-[12px] leading-[18px] pt-[2px] tracking-[0.1px]">
          <div>20:26</div>
          <div>2024/4/24</div>
        </div>
        <div className="ml-[8px] w-[14px] h-[38px] border border-[#5f7188] bg-[linear-gradient(135deg,#5a6a80,#152c4c_50%)]" />
      </div>
    </div>
  );
}

export default function App() {
  return (
    <main className="relative w-[1920px] h-[1080px] overflow-hidden flex flex-col bg-black text-black">
      <TitleBar />
      <div className="h-[1019px] shrink-0 flex">
        <div className="w-[1912px] shrink-0 flex flex-col">
          <div className="h-[2px] shrink-0 border-b border-black bg-[#c8d4e4]" />
          <Header />
          <div className="h-[888px] shrink-0 flex">
            <Sidebar />
            <Board />
            <RightPanel />
          </div>
          <CommandBar />
          <MessageLine />
          <div className="h-[5px] shrink-0 border-t border-b border-[#b8c8dc] bg-[#5f86bd]" />
        </div>
        <div className="w-[8px] border-l border-r-2 border-l-[#d6e2f2] border-r-[#2a3c58] bg-[linear-gradient(#3c5c90,#7393c0_8%,#8fb0dc_24%,#5075ac_27%,#5f86bd)]" />
      </div>
      <Taskbar />
      <Popview />
    </main>
  );
}
